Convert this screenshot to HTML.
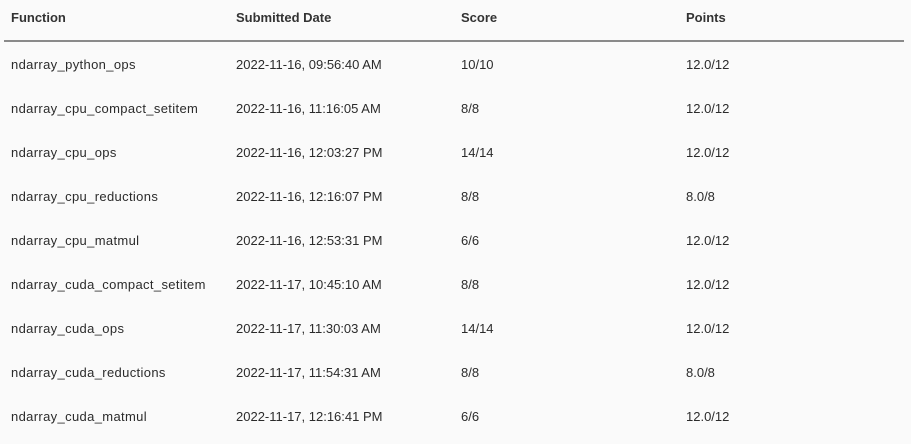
<!DOCTYPE html>
<html><head><style>
body{margin:0;background:#fafafa;width:911px;height:444px;overflow:hidden;font-family:"Liberation Sans",sans-serif;color:#2b2b2b;font-size:13px}
.h{position:absolute;top:10px;font-weight:bold;font-size:13px;color:#333}
.line{position:absolute;left:4px;width:900px;top:40px;height:2px;background:#8a8a8a}
.c{position:absolute;white-space:nowrap}
.f{letter-spacing:0.35px}
</style></head><body>
<div class="h" style="left:11px">Function</div>
<div class="h" style="left:236px">Submitted Date</div>
<div class="h" style="left:461px">Score</div>
<div class="h" style="left:686px">Points</div>
<div class="line"></div>
<div class="c f" style="top:57px;left:11px">ndarray_python_ops</div><div class="c" style="top:57px;left:236px">2022-11-16, 09:56:40 AM</div><div class="c" style="top:57px;left:461px">10/10</div><div class="c" style="top:57px;left:686px">12.0/12</div>
<div class="c f" style="top:101px;left:11px">ndarray_cpu_compact_setitem</div><div class="c" style="top:101px;left:236px">2022-11-16, 11:16:05 AM</div><div class="c" style="top:101px;left:461px">8/8</div><div class="c" style="top:101px;left:686px">12.0/12</div>
<div class="c f" style="top:145px;left:11px">ndarray_cpu_ops</div><div class="c" style="top:145px;left:236px">2022-11-16, 12:03:27 PM</div><div class="c" style="top:145px;left:461px">14/14</div><div class="c" style="top:145px;left:686px">12.0/12</div>
<div class="c f" style="top:189px;left:11px">ndarray_cpu_reductions</div><div class="c" style="top:189px;left:236px">2022-11-16, 12:16:07 PM</div><div class="c" style="top:189px;left:461px">8/8</div><div class="c" style="top:189px;left:686px">8.0/8</div>
<div class="c f" style="top:233px;left:11px">ndarray_cpu_matmul</div><div class="c" style="top:233px;left:236px">2022-11-16, 12:53:31 PM</div><div class="c" style="top:233px;left:461px">6/6</div><div class="c" style="top:233px;left:686px">12.0/12</div>
<div class="c f" style="top:277px;left:11px">ndarray_cuda_compact_setitem</div><div class="c" style="top:277px;left:236px">2022-11-17, 10:45:10 AM</div><div class="c" style="top:277px;left:461px">8/8</div><div class="c" style="top:277px;left:686px">12.0/12</div>
<div class="c f" style="top:321px;left:11px">ndarray_cuda_ops</div><div class="c" style="top:321px;left:236px">2022-11-17, 11:30:03 AM</div><div class="c" style="top:321px;left:461px">14/14</div><div class="c" style="top:321px;left:686px">12.0/12</div>
<div class="c f" style="top:365px;left:11px">ndarray_cuda_reductions</div><div class="c" style="top:365px;left:236px">2022-11-17, 11:54:31 AM</div><div class="c" style="top:365px;left:461px">8/8</div><div class="c" style="top:365px;left:686px">8.0/8</div>
<div class="c f" style="top:409px;left:11px">ndarray_cuda_matmul</div><div class="c" style="top:409px;left:236px">2022-11-17, 12:16:41 PM</div><div class="c" style="top:409px;left:461px">6/6</div><div class="c" style="top:409px;left:686px">12.0/12</div>
</body></html>
